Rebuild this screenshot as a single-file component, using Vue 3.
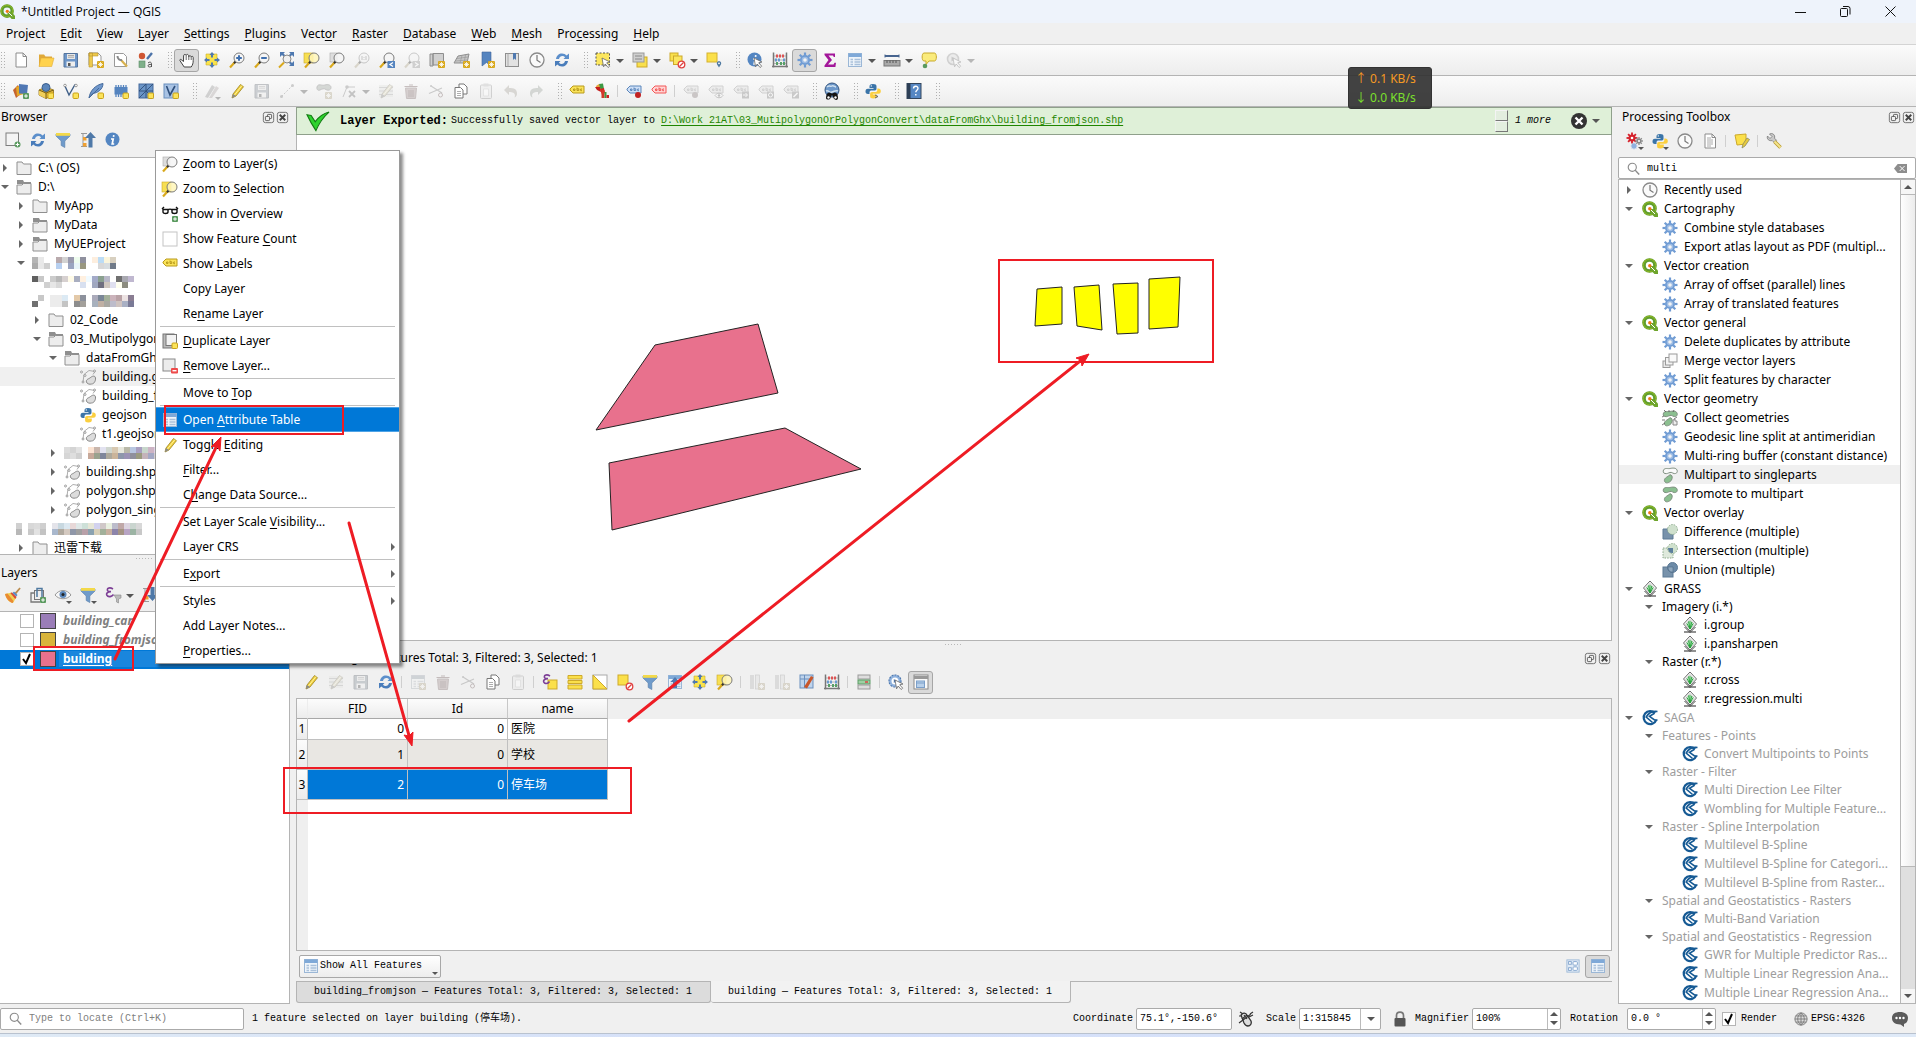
<script setup>
import { h } from 'vue'

/* ---------- icon fragments ---------- */
const badge = '<rect x="9" y="9" width="7" height="7" rx="1" fill="#d9a91d"/><path d="M12.500 10v5M10 12.500h5M10.800 10.800l3.400 3.400M14.200 10.800l-3.400 3.400" stroke="#fff" stroke-width=".8"/>'
const box = '<rect x="10" y="10" width="5.500" height="5.500" rx="1" fill="#fbe35a" stroke="#c9a21b"/>'
const plus = '<rect x="10" y="10" width="6" height="6" rx="1" fill="#5a9a5f"/><path d="M13 11.200v3.600M11.200 13h3.600" stroke="#fff"/>'
const lens = (fill = '#f4f4f4') => `<path d="M1 15.500L6 10" stroke="#d9a91d" stroke-width="2.200"/><path d="M5 11.200l1.600-1.700" stroke="#333" stroke-width="2"/><circle cx="10" cy="6" r="5" fill="${fill}" fill-opacity=".85" stroke="#7c7c7c"/>`
const tri = '<path d="M11 14h6l-3 3z" fill="#555"/>'
const cursor = '<path d="M7 6l8 4-3.300.800 3 3.400-1.600 1.300-2.900-3.500-1.600 2.800z" fill="#fff" stroke="#666" stroke-width=".8"/>'
const tag = (f, s) => `<path d="M1 6l3-3h11v7H4L1 7z" fill="${f}" stroke="${s}"/><path d="M4.500 7.500v-1.500h1.500v1.500zM8 4.500v3h1.800v-1.700H8M13 6h-1.300v1.700H13" stroke="${s}"/>`
const noEntry = '<circle cx="12.500" cy="12.500" r="3.300" fill="#fff" stroke="#e04040" stroke-width="1.300"/><path d="M10.500 14.500l4-4" stroke="#e04040" stroke-width="1.300"/>'
const teeth = (c, r1 = 4.500, r2 = 7.500, w = 2.200, cx = 8, cy = 8) =>
  Array.from({ length: 8 }, (_, i) => {
    const a = (i * Math.PI) / 4
    const p = (r) => `${(cx + Math.cos(a) * r).toFixed(1)} ${(cy + Math.sin(a) * r).toFixed(1)}`
    return `<path d="M${p(r1)}L${p(r2)}" stroke="${c}" stroke-width="${w}"/>`
  }).join('')
const grid = '<rect x="1.500" y="1.500" width="13" height="13" fill="#eef4fa" stroke="#9bb7d6"/><rect x="1.500" y="1.500" width="13" height="3.500" fill="#7fa9d8"/><path d="M3.500 7.500h2.500M7.500 7.500h6M3.500 10h2.500M7.500 10h6M3.500 12.500h2.500M7.500 12.500h6" stroke="#a9c0da" stroke-width="1.300"/>'
const floppy = '<path d="M1 1.500h13.500V15H1z" fill="#6d96c9" stroke="#55749c"/><rect x="4" y="2" width="8" height="5" fill="#e6e6e6"/><path d="M5 3.500h6M5 5.200h6" stroke="#999" stroke-width=".8"/><rect x="3.500" y="9.500" width="8.500" height="5" fill="#eee"/><rect x="5" y="11" width="2.500" height="3" fill="#555"/>'
const pencil = '<path d="M3 15l1-4 7.500-9.500 3 2.200L7 13z" fill="#f0cf3a" stroke="#9b8324" stroke-width=".8"/><path d="M3 15l1-4 3 2z" fill="#8b8b8b"/><path d="M5.500 12l7.500-9.500" stroke="#fff3a0"/>'
const funnel = '<path d="M1 2h14v2L9.800 9v6.500l-3.600-2V9L1 4z" fill="#6f9bcb" stroke="#5a81ad" stroke-width=".7"/><rect x="1" y="1" width="14" height="2.800" fill="#f3d94a"/>'
const poly = '<path d="M3 13L4 5.500 9 1.500l6 1-2 3" stroke="#999" stroke-width=".8"/><path d="M7 14c-2-3 1-4 3-5 2-2 5-3 5.500 0 .3 3-1.500 6-4 6-2 .5-3.500 0-4.500-1z" fill="#dcdcdc" stroke="#888"/><circle cx="1.500" cy="3" r="1" fill="#fff" stroke="#888" stroke-width=".8"/><circle cx="5" cy="6.500" r="1" fill="#fff" stroke="#888" stroke-width=".8"/><circle cx="3" cy="13" r="1" fill="#fff" stroke="#888" stroke-width=".8"/><circle cx="14.500" cy="2" r="1" fill="#fff" stroke="#888" stroke-width=".8"/>'
const snake = '<path d="M8 1c-3 0-3.500 1-3.500 2.500V5H8.500v.7H3C1 5.700.5 7 .5 8.500S1.200 11 3 11h1.500V9.500C4.500 8 5.500 7.500 6.500 7.500h3.300C11 7.500 11.500 6.500 11.500 5.500V3.500C11.500 1.700 10.500 1 8 1z" fill="#3a74a8"/><path d="M8.300 15.500c3 0 3.500-1 3.500-2.500v-1.500H7.800v-.7h5.500c2 0 2.500-1.300 2.500-2.800S15 5.500 13.300 5.500h-1V7c0 1.500-1 2-2 2H7c-1.200 0-1.900.8-1.900 2v2c0 1.800.8 2.500 3.200 2.500z" fill="#fbcf3f"/><circle cx="6.300" cy="2.900" r=".7" fill="#fff"/>'
const arrows4 = '<path d="M2 2h11v11H2z" fill="#f9e34c" stroke="#cfae27" stroke-width=".6"/><path d="M8 0l2.600 3H9v2.500H7V3H5.400zM8 16l2.600-3H9v-2.500H7V13H5.400zM0 8l3-2.600V7h2.500v2H3v1.600zM16 8l-3-2.600V7h-2.500v2H13v1.600z" fill="#4f79b0"/>'
const reload = '<path d="M2 7C2.500 3.500 5 1.500 8 1.500c2 0 3.500.8 4.600 2L15 1.500V7H9.500l1.600-1.700C9 3 5.500 4 5 7z" fill="#5c8fcb"/><path d="M14 9c-.5 3.500-3 5.500-6 5.500-2 0-3.500-.8-4.600-2L1 14.500V9h5.500l-1.600 1.700C7 13 10.500 12 11 9z" fill="#4a7dbb"/>'
const clock = '<circle cx="8" cy="8" r="7" fill="#fafafa" stroke="#8a8a8a" stroke-width="1.300"/><path d="M8 3v5.200l3.500 2.300" stroke="#777" stroke-width="1.200"/>'
const qmark = '<circle cx="7.500" cy="7.500" r="5.500" stroke="#5f9e2e" stroke-width="3.600"/><circle cx="7.500" cy="7.500" r="6.300" stroke="#93b823" stroke-width="1"/><path d="M8 8l3.500 0L16 12.500V16h-3.500L8 11.500z" fill="#6ea52c"/><path d="M8.500 8.500l4.500 4.500" stroke="#fff"/><circle cx="7.800" cy="7.800" r="1.700" fill="#ee7913"/>'
const sheet = '<path d="M3 1h7l3.500 3.500V15H3z" fill="#fff" stroke="#8c8c8c"/><path d="M10 1v3.500h3.500" stroke="#8c8c8c"/>'
const info = '<circle cx="7.500" cy="7.500" r="7" fill="#5486c2"/><path d="M8.800 3.200l-.3 1.600M6 7h2.200l-1 5h2" stroke="#fff" stroke-width="1.700"/>'
const abacus = '<rect x="1" y="1" width="14" height="14" fill="#f3f3f3"/><path d="M1.500.5v15M14.500.5v15M0 14.500h16" stroke="#777" stroke-width="1.500"/><path d="M2 4h12M2 8h12M2 11.500h12" stroke="#999" stroke-width=".7"/><path d="M5 2.500v3M8 2.500v3M11 2.500v3" stroke="#d55" stroke-width="2"/><path d="M4 6.500v3M7 6.500v3M12 6.500v3" stroke="#6a9bd0" stroke-width="2"/><path d="M5 10v3M9 10v3M12 10v3" stroke="#58a068" stroke-width="2"/>'
const clip = '<rect x="2.500" y="2" width="11" height="13.500" rx="1" fill="#e8e8e8" stroke="#999"/><rect x="5.500" y=".5" width="5" height="3" fill="#bbb"/><path d="M5.500 6h5v7h-5z" fill="#fff" stroke="#bbb" stroke-width=".7"/>'
const copy = '<path d="M6 1h5l3 3v7H6z" fill="#fff" stroke="#777"/><path d="M2 4.500h5.500L10 7v8H2z" fill="#fff" stroke="#777"/><path d="M4 8.500h4M4 10.500h4M4 12.500h4" stroke="#999" stroke-width=".8"/>'
const scissors = '<path d="M3 3l11 7M1 10.500L14 5" stroke="#888" stroke-width="1.300"/><circle cx="12.500" cy="12" r="2" stroke="#b55"/><circle cx="3" cy="3" r="1" fill="#888"/>'
const trash = '<path d="M2.500 5h11l-1 10.500h-9z" fill="#d88" stroke="#b66"/><path d="M1.500 3.500h13M6 2h4M6 7v7M8 7v7M10 7v7" stroke="#b55" stroke-width="1.200"/>'
const blob = (top, bottom) => `<path d="M1.500 3C3 .5 6 2 8 1.500s6-1 7 1.500-1 4-3 3.500-2-1.500-4-1-3 1.500-5 1S1 4.500 1.500 3z" fill="${top}" stroke="#7f8f80"/><path d="M3 15c-1.500-2 0-4 2-5s2.500-2.800 4-2 1.500 3 .5 5-5 4-6.500 2z" fill="${bottom}" stroke="#7f8f80"/>`
const eraseRows = '<rect x="1" y="2" width="14" height="12" fill="#dfe6d8"/><path d="M1 4.500h14M1 8h14M1 11.500h14" stroke="#aaa"/>'

const icons = {
  q: qmark,
  new: sheet,
  open: '<path d="M1 14.500V2.500h5l1.500 2H14v3" fill="#e0a93a"/><path d="M1 14.500l2-8.500h13l-2.300 8.500z" fill="#ffd24d" stroke="#e0ac38" stroke-width=".6"/>',
  save: floppy,
  layout: '<path d="M1 1h9l3 3v9H1z" fill="#fff" stroke="#999"/><path d="M1 1h3.500v14H1zM1 1h9v3H1z" fill="#edc94e" stroke="#b8942b" stroke-width=".6"/>' + badge,
  layoutmgr: '<path d="M1.500 1.500h9l3 3v10h-12z" fill="#fff" stroke="#999"/><path d="M8 8l6 6.500" stroke="#d9b24e" stroke-width="2.200"/><path d="M4.500 4c0 3 2 4.500 4.500 4" stroke="#888" stroke-width="2"/>',
  style: '<circle cx="4" cy="4" r="3.200" fill="#cf5633"/><path d="M9 7l5-6" stroke="#4c73a9" stroke-width="2.400"/><rect x="1" y="9" width="6" height="6.500" fill="#7fb08a" stroke="#5c8c66" stroke-width=".6"/><path d="M10 11c1.500-1.500 3.500-1 3.500.8V15M13.500 12.500c-2-.3-3.700.2-3.500 1.500s2.800 1.200 3.500 0" stroke="#555"/>',
  hand: '<path d="M4.500 9.500L2 7.500C.8 7 .5 8.200 1.200 9l4 6h7c1.500-2 2-4 2-6.500V5.500c0-1.500-1.800-1.500-2-.2 0-2-2.200-2.200-2.400-.5C9.700 1.800 7.300 1.800 7.200 3.500c-.4-1.600-2.600-1.300-2.600.3z" fill="#fff" stroke="#444"/><path d="M7.200 4v4M9.800 4.500V8M12.200 5.500V8" stroke="#444" stroke-width=".8"/>',
  panto: arrows4,
  zin: lens() + '<path d="M10 3.200v5.600M7.200 6h5.600" stroke="#3f6fae" stroke-width="2"/>',
  zout: lens() + '<path d="M7.200 6h5.600" stroke="#3f6fae" stroke-width="2"/>',
  zfull: '<path d="M1 0h5L4.500 1.500 6.500 3.500 5 5 3 3 1 5zM15 0v5l-2-2-2 2-1.500-1.500 2-2L10 0zM15 14h-5l1.500-1.500-2-2L11 9l2 2 2-2z" fill="#4f79b0"/><circle cx="8" cy="7" r="4" fill="#f0f0f0" stroke="#888"/><path d="M0 15.500l5-5" stroke="#d9a91d" stroke-width="2"/>',
  zsel: '<rect x="0" y="1" width="9" height="10" fill="#f7df52" stroke="#caa92a" stroke-width=".6"/>' + lens('#fff6b8'),
  zlay: '<rect x="1" y="1" width="7" height="9" fill="#ddd" stroke="#aaa" stroke-width=".6"/>' + lens(),
  zoomnat: lens(),
  znat: lens() + '<path d="M8 4v4M12 4v4M10 5v.8M10 7v.8" stroke="#777"/>',
  zlast: lens() + '<rect x="8.500" y="9" width="7.500" height="7" fill="#5584bf"/><path d="M14 10.500l-3 2 3 2" stroke="#fff" stroke-width="1.300"/>',
  znext: lens() + '<rect x="8.500" y="9" width="7.500" height="7" fill="#999"/><path d="M11 10.500l3 2-3 2" stroke="#fff" stroke-width="1.300"/>',
  newmap: '<path d="M1 2h3v12H1zM4 1.500h10.500V13H4z" fill="#d0d0d0" stroke="#8e8e8e"/>' + badge,
  new3d: '<path d="M4 4l11-2-2 9L0 11z" fill="#c7c7c7" stroke="#8e8e8e"/><path d="M3 6.500l11-1.500M8 3.500L6 11M11.500 3L10 11M1.500 9L13 8" stroke="#999" stroke-width=".7"/>' + badge,
  bookmark: '<path d="M3 0h9v14l-4.500-3.500L3 14z" fill="#5584bf" stroke="#3f669a" stroke-width=".6"/>' + badge,
  book: '<rect x="1.500" y="1.500" width="13" height="13" fill="#e2e2e2" stroke="#8e8e8e"/><path d="M4 1.500v13" stroke="#aaa"/><path d="M9 1h3v7l-1.500-1.500L9 8z" fill="#4f79b0"/>',
  clock, reload,
  select: '<rect x="1" y="1" width="13.500" height="12" fill="#fbe65e" stroke="#555" stroke-dasharray="2 1.500"/>' + cursor,
  selval: '<rect x="5" y="5" width="10" height="10" fill="#f9e04c" stroke="#cda92b"/><rect x="1" y="1" width="11" height="9" fill="#cfcfcf" stroke="#999"/><path d="M3 4h7M3 7h7" stroke="#888"/>',
  desel: '<rect x="1" y="1" width="8" height="8" fill="#f9e04c" stroke="#cda92b"/><rect x="4.500" y="4" width="8.500" height="8.500" fill="#fbe65e" stroke="#cda92b"/>' + noEntry,
  selloc: '<rect x="1" y="1" width="10" height="9" fill="#fbe04a" stroke="#d5b22e"/><path d="M13 15.500c-1-2-2.200-2.600-2.200-4.200 0-2.600 4.400-2.600 4.400 0 0 1.600-1.200 2.200-2.200 4.200z" fill="#4f79a0"/><circle cx="13" cy="11.300" r=".9" fill="#fff"/>',
  identify: info + cursor,
  abacus,
  gear: teeth('#6f9bd3') + '<circle cx="8" cy="8" r="5" fill="#6f9bd3"/><circle cx="8" cy="8" r="3.300" fill="#9dbce4"/><circle cx="8" cy="8" r="1.800" fill="#f4f4f4"/>',
  sigma: '<path d="M2.500 1.500H13V5h-1.200L11 3.500H6.500L10 8l-4 4.500h5.500l1-1.800H14l-.6 4.300H2.500v-1.500L6.500 8 2.500 3z" fill="#a3179a"/>',
  table: grid,
  measure: '<path d="M1 4h14" stroke="#47648f" stroke-width="2"/><path d="M1 2.500v3M15 2.500v3" stroke="#47648f"/><rect x="0" y="8.500" width="16" height="5.500" fill="#aaa" stroke="#777"/><path d="M3 8.500v2.500M6 8.500v2.500M9 8.500v2.500M12 8.500v2.500" stroke="#555"/>',
  tip: '<path d="M3 1h10.500C16 1 16 9 13.500 9H8l-3 3.500V9H3C.5 9 .5 1 3 1z" fill="#faeb7c" stroke="#c8aa2c"/><circle cx="4" cy="14" r="2.300" fill="#5a9a5f"/>',
  action: '<circle cx="7" cy="7" r="5.500" fill="#ddd" stroke="#999" stroke-width="1.600"/><path d="M5.500 4.500l4 2.500-4 2.500z" fill="#888"/>' + cursor,
  dsm: '<path d="M0 7l5-5 4 8-6 5z" fill="#c5642f"/><path d="M3 4l7-2 1 9-7 2z" fill="#e3a727"/><path d="M6 1l9 1-1 9-8-.5z" fill="#5078b4"/>' + plus,
  gpkg: '<path d="M1 7l7-3 7.500 3v5L8 15.500 1 12z" fill="#e3b93d" stroke="#8a6b16" stroke-width=".8"/><circle cx="8" cy="4.500" r="4" fill="#5b86bb" stroke="#3b5f8d"/><path d="M1 7l7 3v5.500L1 12z" fill="#f0cf5a"/><path d="M1 7l7 3 7.500-3M8 10v5.500" stroke="#6b5210" stroke-width=".9"/>' + box,
  shp: '<path d="M1.500 2L6 12l6-10.500" stroke="#3f5f88" stroke-width="1.400"/><circle cx="2" cy="2.500" r="1.300" fill="#fff" stroke="#777" stroke-width=".7"/><circle cx="13" cy="2.500" r="1.300" fill="#fff" stroke="#777" stroke-width=".7"/>' + box,
  spatialite: '<path d="M1 15C2 8 7 2 15 .5 15 6 10 10 4.500 10.500z" fill="#6f97cb" stroke="#44699b"/><path d="M1 15L11 5" stroke="#44699b"/>' + box,
  scratch: '<rect x="1.500" y="4" width="13" height="7.500" fill="#5584bf"/><path d="M3 2v12M5.500 2v12M8 2v12M10.500 2v12M13 2v12" stroke="#5584bf" stroke-width="1.300"/>' + box,
  mesh: '<rect x="1" y="1" width="14" height="14" fill="#6a94c6" stroke="#44699b"/><path d="M1 8h14M8 1v14M1 8l7-7M1 15L15 1M8 8l7 7" stroke="#2f4f7b" stroke-width=".9"/>' + box,
  virtual: '<rect x="1" y="1" width="14" height="14" fill="#a9c3e4" stroke="#6a8fbd"/><path d="M3.500 3L7 12l5-9" stroke="#2f4f7b" stroke-width="1.600"/>' + box,
  edits: '<path d="M1 14L8 2l3 2-7 11z" fill="#999"/><path d="M5 15l7-12 3 2-7 10z" fill="#c4a4a4"/>' + tri,
  pencil, floppy,
  line: '<path d="M2.500 13.500L13 3" stroke="#888" stroke-dasharray="2 1.500"/><circle cx="2.500" cy="13.500" r="1.500" fill="#888"/><circle cx="13.500" cy="2.500" r="1.500" fill="#888"/>',
  addpoly: '<path d="M1 4c1-4 5-1 8-2s6 0 6 2.500S12 8 10 6.500 6 6 4 7 .5 6.500 1 4z" fill="#8bb08f" stroke="#777"/>' + badge,
  vertex: '<path d="M2 14L6 4h8" stroke="#888"/><circle cx="6" cy="4" r="1.800" fill="#888"/><path d="M8 8l6 6M14 8l-6 6" stroke="#777" stroke-width="1.800"/>',
  multiedit: eraseRows + pencil,
  trash, scissors, copy, clip,
  undo: '<path d="M1 7l5-5v3c5 0 8 1 8 5.500 0 2-1 3.500-2.500 4 1.500-4-1-5.500-5.500-5.500v3z" fill="#b9a77c"/>',
  redo: '<path d="M15 7l-5-5v3C5 5 2 6 2 10.500c0 2 1 3.500 2.500 4C3 10.500 5.500 9 10 9v3z" fill="#8fae8f"/>',
  label: tag('#fbe45a', '#b99a1c'),
  diagram: '<path d="M2 3l3-2 3 2-2 4-3-1z" fill="#e8a33a"/><path d="M5 1l4-.5 1 5.500-3 2z" fill="#3d9a45"/><path d="M1 4l5 0 1 5-4-2z" fill="#c41e1e"/><path d="M6 6l4-1 1 5-3 2z" fill="#d22"/><path d="M7.500 7h3v8h-3z" fill="#d23a2a"/><path d="M10.500 9h2v6h-2z" fill="#3d9a45"/><path d="M12.500 12H15v3h-2.500z" fill="#c22"/>',
  pinlabel: tag('#cfe0f7', '#5b86bb') + '<circle cx="12" cy="12" r="3" fill="#c32222"/>',
  badlabel: tag('#ffd6d6', '#f25757'),
  l1: tag('#ddd', '#999') + '<circle cx="12" cy="12" r="3" fill="#a77"/>',
  l2: tag('#ddd', '#999') + '<path d="M7 12.500c2-3 6-3 8 0-2 3-6 3-8 0z" fill="#fff" stroke="#777"/><circle cx="11" cy="12.500" r="1.300" fill="#777"/>',
  l3: tag('#ddd', '#999') + '<rect x="9" y="8.500" width="7" height="7" fill="#888"/><path d="M10 12h4M12.500 10l2 2-2 2" stroke="#fff"/>',
  l4: tag('#ddd', '#999') + '<rect x="9" y="8.500" width="7" height="7" fill="#888"/><circle cx="12.500" cy="12" r="2" stroke="#fff"/>',
  l5: tag('#ddd', '#999') + '<rect x="9" y="8.500" width="7" height="7" fill="#888"/><path d="M10.500 14l4-4" stroke="#fff" stroke-width="1.500"/>',
  globesearch: '<circle cx="8" cy="7" r="7" fill="#6d98ca" stroke="#34557f"/><path d="M3 4c2-2 4 0 5-1s3 1 4 1M2 8c3-1 3 2 6 1s4-2 6-1" stroke="#cfe0ef" stroke-width="1.500"/><path d="M2 15c0-3 1-5.500 3-5.500s1.500 1 3 1 1-1 3-1 3 2.500 3 5.500-4 2-4.500 0L8.500 12.500h-1L6.500 15C6 17 2 17 2 15z" fill="#151515"/><circle cx="4.500" cy="14.500" r="1.200" fill="#fff"/><circle cx="11.500" cy="14.500" r="1.200" fill="#fff"/>',
  python: snake,
  pyconsole: snake + '<path d="M10 12l3 1.500-3 1.500" stroke="#666"/>',
  help: '<rect x="1" y="0.500" width="14" height="15" fill="#5687c3" stroke="#34465c"/><rect x="1" y="0.500" width="3.500" height="15" fill="#2c3e55"/><path d="M7.500 5.500c0-3 4.500-3 4.500-.3 0 2-2.200 2-2.200 4M9.800 11v1.500" stroke="#fff" stroke-width="1.400"/>',
  addlayer: '<rect x="1" y="1" width="12.500" height="12.500" fill="#f4f4f4" stroke="#7d7d7d"/><circle cx="12.500" cy="12.500" r="3" fill="#5a9a5f"/><path d="M12.500 10.700v3.600M10.700 12.500h3.600" stroke="#fff"/>',
  funnel,
  funnelm: funnel + tri,
  collapse: '<path d="M1 1.500h6M1 14.500h6M3 2v12" stroke="#999"/><rect x="3" y="5" width="3.500" height="3.500" fill="#f0a030"/><rect x="3" y="11" width="3.500" height="3.500" fill="#f0a030"/><path d="M10.500 0L16 6h-3.500v9.500h-4V6H5z" fill="#4f79a8"/>',
  expand: '<path d="M1 1.500h6M1 14.500h6M3 2v12" stroke="#999"/><rect x="3" y="9" width="3.500" height="3.500" fill="#f0a030"/><path d="M10.500 14L16 8h-3.500V0h-4v8H5z" fill="#4f79a8"/>',
  info,
  brush: '<path d="M9 6.500l5.500-6 1.200 1L10.500 8z" fill="#b98b4e"/><path d="M0 7l7-1.500 4.500 4.500-3.500 6C5 16 1 12 0 7z" fill="#f1d152"/><path d="M0 7l2.500-.5 6 7.500-.8 2C5 15.500 1 12 0 7z" fill="#e98a33"/><path d="M7 5.500l4.500 4.500-1.200 2-5-6z" fill="#d9483b"/><path d="M9 4.500l3.500 3.500-1.200 1.500L7.500 6z" fill="#5a8ac6"/>',
  addgroup: '<path d="M4 6H1v9h9" stroke="#777" stroke-width="1.300"/><rect x="4.500" y="3.500" width="9" height="9" fill="#eee" stroke="#777"/><path d="M7 10V1.500h5V10" stroke="#4f79a0" stroke-width="1.500"/>' + plus,
  eye: '<path d="M0 8c4-6 12-6 16 0-4 5-12 5-16 0z" fill="#f6f6f6" stroke="#999"/><circle cx="8" cy="7.500" r="3.500" fill="#5a86ba"/><circle cx="8" cy="7.500" r="1.500" fill="#222"/>' + tri,
  epsf: '<path d="M8 2C4-.5 1 2 3 4c1 .8 2.500.6 3 .6C3 4.500 0 6.500 2.500 9c2 1.500 5 0 6-1.500" stroke="#7d3f96" stroke-width="1.600"/><path d="M9 8h7v3l-2.500 1v4l-2-1v-3z" fill="#bbb" stroke="#888" stroke-width=".6"/>',
  folder: '<path d="M1 2h5l1.500 2H15v10.500H1z" fill="#ededed" stroke="#8f8f8f"/>',
  folders: '<path d="M1 1h6l1 2h7v2H1z" fill="#8f8f8f"/><path d="M1 6h5l1.500-1.500H15V15H1z" fill="#ededed" stroke="#8f8f8f"/>',
  poly,
  glasses: '<path d="M0 3l2-2M16 3l-2-2M1 3.500h5v2.500c0 2-5 2-5 0zM10 3.500h5v2.500c0 2-5 2-5 0zM6 4c1-1 3-1 4 0" stroke="#111" stroke-width="1.400"/>' + plus,
  blankbox: '<rect x="1" y="1" width="14" height="14" fill="#fff" stroke="#c4c4c4"/>',
  duplicate: '<rect x="1" y="1" width="11" height="14" fill="#bbb" stroke="#777"/><rect x="4" y="1.500" width="10.500" height="11" fill="#f3f3f3" stroke="#777"/>' + box,
  remove: '<rect x="1" y="1" width="12" height="12" fill="#ececec" stroke="#888"/><rect x="9" y="10" width="7" height="5.500" rx="1" fill="#ee4b4b"/><path d="M10.500 12.700h4" stroke="#fff" stroke-width="1.400"/>',
  addfeat: grid + badge,
  selexp: '<rect x="6" y="6" width="9" height="9" fill="#fbe04a" stroke="#cda92b"/><path d="M8 2C4-.5 1 2 3 4c1 .8 2.500.6 3 .6C3 4.500 0 6.500 2.500 9c2 1 4 0 5-1.500" stroke="#7d3f96" stroke-width="1.600"/>',
  selall: '<path d="M1 1.500h14v3.500H1zM1 6.500h14v3H1zM1 11h14v4H1z" fill="#fbe04a" stroke="#cda92b"/>',
  invert: '<rect x="1" y="1" width="14" height="14" fill="#fff" stroke="#aaa"/><path d="M1 1v14h14z" fill="#fbe04a" stroke="#cda92b"/>',
  unselect: '<rect x="1" y="1" width="10" height="10" fill="#fbe04a" stroke="#cda92b"/>' + noEntry,
  totop: grid + '<path d="M8 3l4.500 5H10v6H6V8H3.500z" fill="#4f79b0"/>',
  newfield: '<rect x="1" y="1" width="4" height="14" fill="#bbb"/><rect x="6.500" y="1" width="4" height="14" fill="#ddd" stroke="#999" stroke-width=".7"/>' + badge,
  condfmt: '<rect x="1" y="1" width="13" height="13" fill="#bfd4ec" stroke="#6a8fbd"/><path d="M1 5h13M5.500 1v13" stroke="#6a8fbd"/><path d="M5 13L12 2l2.500 1.500L8 14.500z" fill="#c9572a"/>',
  dock: '<rect x="2" y="1" width="12" height="4" fill="#ddd" stroke="#999"/><rect x="2" y="6" width="12" height="4" fill="#9dd0a3" stroke="#5c9c66"/><rect x="2" y="11" width="12" height="4" fill="#ddd" stroke="#999"/><path d="M9 8h3" stroke="#d44" stroke-width="1.500"/>',
  actionon: '<circle cx="7" cy="7" r="6" fill="#8fb2de" stroke="#4f79b0" stroke-width="1.200" stroke-dasharray="2 1"/><circle cx="7" cy="7" r="3.500" fill="#fff"/><path d="M5.800 5l3 2-3 2z" fill="#4f79b0"/>' + cursor,
  dockwin: '<rect x="1" y="1" width="14" height="14" fill="#fafafa" stroke="#8a8a8a"/><path d="M1 3.500h14" stroke="#999" stroke-width="3"/><rect x="3.500" y="7" width="8" height="6.500" fill="#b8d0ea" stroke="#7b9fc9"/><path d="M3.500 9h8" stroke="#7b9fc9"/>',
  form: '<rect x="1" y="1" width="14" height="14" fill="#dfeaf6" stroke="#9bb7d6"/><rect x="3" y="3" width="3" height="3" fill="#fff" stroke="#7b9fc9"/><rect x="3" y="10" width="3" height="3" fill="#fff" stroke="#7b9fc9"/><rect x="8" y="3" width="5" height="4" rx="1" fill="#fff" stroke="#7b9fc9"/><rect x="8" y="9" width="5" height="4" rx="1" fill="#fff" stroke="#7b9fc9"/>',
  gears: teeth('#d5202a', 2, 5.500, 1.800, 5, 5) + '<circle cx="5" cy="5" r="3.500" fill="#d5202a"/><circle cx="5" cy="5" r="1.300" fill="#fff"/>' + teeth('#888', 1.500, 4, 1.300, 12, 8) + '<circle cx="12" cy="8" r="2.500" fill="#888"/><circle cx="12" cy="8" r="1" fill="#fff"/>' + teeth('#8fb0de', 1, 3.200, 1.200, 7, 13) + '<circle cx="7" cy="13" r="2.200" fill="#8fb0de"/>' + tri,
  pythonm: snake + tri,
  report: sheet + '<path d="M5 5h4M5 7h6M5 9h6M5 11h6M5 13h4" stroke="#aaa"/>',
  editinplace: '<path d="M1 2l11-1v10l-9 1z" fill="#fbe04a" stroke="#cda92b"/><path d="M8 15l1-4 4-6 2.500 1.500L11 13z" fill="#e6c93e" stroke="#8b8b60" stroke-width=".8"/>',
  wrench: '<path d="M1.500 3l2.500 2.500 2-2L3.500 1c3-1.500 6 1 5 4.200l2 2-2.300 2.300-2-2C3.500 8.500.2 6 1.500 3z" fill="#c9c9c9" stroke="#777" stroke-width=".8"/><path d="M8.500 8.500l6 6" stroke="#b8982a" stroke-width="3.500"/><path d="M8.500 8.500l6 6" stroke="#f4e48c" stroke-width="2"/>',
  merge: '<rect x="1" y="8" width="7" height="6.500" fill="#e9e9e9" stroke="#999"/><rect x="3.500" y="4.500" width="7.500" height="7.500" fill="#f3f3f3" stroke="#999"/><rect x="7" y="1" width="8" height="8" fill="#fafafa" stroke="#999"/>',
  collect: blob('#8bbf90', '#8bbf90') + '<path d="M2 0l2 2M7 0v2M12 0l-1 2M0 7l2-1M0 10h3M0 15l3-2M12 9l3-2" stroke="#555" stroke-width=".8"/><path d="M11 10l2-1v2h2v4h-4z" fill="#eee" stroke="#888"/>',
  single: blob('#fafafa', '#8bbf90'),
  multi: blob('#8bbf90', '#8bbf90'),
  diff: '<path d="M1 5h5c0 3 1 5 5 5v5H1z" fill="#7892ab" stroke="#5d7a95"/><circle cx="10.500" cy="5.500" r="5" fill="#cfe0cd" stroke="#8aa78a" stroke-width=".9" stroke-dasharray="1.500 1.200"/>',
  inter: '<path d="M1 5h10v10H1z" fill="#dfe9dc" stroke="#8aa78a" stroke-dasharray="1.500 1.200"/><circle cx="10.500" cy="5.500" r="5" fill="#cfe0cd" stroke="#8aa78a" stroke-width=".9" stroke-dasharray="1.500 1.200"/><path d="M6 5h5v5c-3 .5-5-1.500-5-5z" fill="#5d7f9c"/>',
  union: '<rect x="1" y="5" width="10" height="10" fill="#7892ab" stroke="#5d7a95"/><circle cx="10.500" cy="5.500" r="5" fill="#6d8ba8" stroke="#5d7a95"/><path d="M6 5h5v5c-3 .5-5-1.500-5-5z" fill="#8fa7bd" stroke="#4c6883" stroke-width=".6"/>',
  grass: '<path d="M2 15h12" stroke="#555" stroke-width="1.300"/><path d="M8 0l6.500 7L8 14 1.500 7z" fill="#fff" stroke="#555" stroke-width=".9"/><path d="M8 2.500l4.300 4.700L8 12 3.700 7.200z" fill="#e8f5e8" stroke="#9a9a9a" stroke-width=".6"/><path d="M8 12V4M8 12L5 6.500M8 12l3-5.500M8 12L6.500 4.500M8 12l1.800-7" stroke="#27a53c"/><path d="M2.500 10L8 15.500 13.500 10" stroke="#444"/>',
  saga: '<path d="M13 3.200A6.500 6.500 0 1 0 14.300 9.800" stroke="#165a94" stroke-width="2.200"/><path d="M15.500 1.500C10.500 1 6.500 3 4.200 7l6.300 5.500" stroke="#165a94" stroke-width="1.600"/><path d="M12.500 3.200L7.500 6.300l5 3.700H15.500" stroke="#165a94" stroke-width="1.600"/>',
  search: '<circle cx="6.500" cy="6.500" r="5" stroke="#8c8c8c" stroke-width="1.400"/><path d="M10 10l5 5.500" stroke="#8c8c8c" stroke-width="1.800"/>',
  clear: '<path d="M0 8l4.500-5.500H16v11H4.500z" fill="#8d8d8d"/><path d="M7 5l6 6M13 5l-6 6" stroke="#fff" stroke-width="1.200"/>',
  float: '<rect x=".5" y=".5" width="15" height="15" rx="3" stroke="#666" stroke-width="1.300"/><rect x="6.500" y="3.500" width="6" height="6" rx="1" stroke="#555" stroke-width="1.300"/><rect x="3.500" y="6.500" width="6" height="6" rx="1" fill="#f0f0f0" stroke="#555" stroke-width="1.300"/>',
  close: '<rect x=".5" y=".5" width="15" height="15" rx="3" stroke="#666" stroke-width="1.300"/><path d="M4 4l8 8M12 4l-8 8" stroke="#444" stroke-width="2.800"/>',
  check: '<path d="M0 3.500l3 .5 3 4.500C9 4.500 12 2.500 16 1.500 12 5 9 9 6.500 15 4.500 12 2 8 0 3.500z" fill="#2ed32e" stroke="#127a12" stroke-width=".8"/>',
  closemsg: '<circle cx="8" cy="8" r="8" fill="#333"/><path d="M4.500 4.500l7 7M11.500 4.500l-7 7" stroke="#fff" stroke-width="2.400"/>',
  lock: '<path d="M4.500 7V4.500c0-4.500 7-4.500 7 0V7" stroke="#777" stroke-width="1.700"/><rect x="2.500" y="7" width="11" height="8.500" rx="1" fill="#555"/>',
  globe: '<circle cx="8" cy="8" r="7" fill="#ddd" stroke="#777"/><path d="M1 8h14M2 4.500h12M2 11.500h12M8 1v14M8 1C3 4 3 12 8 15M8 1c5 3 5 11 0 14" stroke="#777"/>',
  bubble: '<path d="M8 1c5 0 8 2.500 8 6s-2 5.500-4 6v3l-3.500-2.600C3 13.500 0 11 0 7s3-6 8-6z" fill="#5c5c5c"/><circle cx="4.500" cy="7" r="1.200" fill="#fff"/><circle cx="8" cy="7" r="1.200" fill="#fff"/><circle cx="11.500" cy="7" r="1.200" fill="#fff"/>',
  mouse: '<path d="M3 4c2-3 5-2 6 0l4 6c1 3-1 5-3 5s-3-1-4-3z" fill="#ddd" stroke="#333" stroke-width="1.300"/><path d="M4 8l5-4M6 4l3 4M2 1l3 2M1 5l3 0M12 3l3-2M11 6l4-2M1 12l12-9" stroke="#333" stroke-width="1.200"/>'
}

const Icon = ({ name, size = 16 }) =>
  h('svg', { viewBox: '0 0 16 16', width: size, height: size, fill: 'none', innerHTML: icons[name], style: 'overflow:visible;flex:none', 'aria-hidden': 'true' })
Icon.props = ['name', 'size']

/* "&" marks the access key of a label */
const Mnemonic = ({ text }) => {
  const at = text.indexOf('&')
  if (at < 0) return h('span', text)
  return h('span', [text.slice(0, at), h('u', text[at + 1]), text.slice(at + 2)])
}
Mnemonic.props = ['text']

/* "!" disabled, "*" pressed, trailing ">" drop-down, "|" handle, "/" separator */
const parse = (s) =>
  s.split(' ').map((t) => {
    if (t === '|' || t === '/') return { kind: t }
    return { kind: 'b', off: t.startsWith('!'), on: t.startsWith('*'), drop: t.endsWith('>'), name: t.replace(/[!*>]/g, '') }
  })

const menus = ['Pro&ject', '&Edit', '&View', '&Layer', '&Settings', '&Plugins', 'Vect&or', '&Raster', '&Database', '&Web', '&Mesh', 'Pro&cessing', '&Help']
const mainBars = [
  parse('new open save layout layoutmgr style | *hand panto zin zout zfull zsel zlay !znat zlast !znext newmap new3d bookmark book clock reload | select> selval> desel> selloc | identify abacus *gear sigma table> measure> tip !action>'),
  parse('dsm gpkg shp spatialite scratch mesh virtual | !edits pencil !floppy !line> !addpoly !vertex> !multiedit !trash !scissors copy !clip !undo !redo | label diagram / pinlabel badlabel / !l1 !l2 !l3 !l4 !l5 | globesearch | pyconsole | help |')
]
const browserBar = parse('addlayer reload funnel collapse info')
const layersBar = parse('brush addgroup eye funnelm epsf> expand')
const attrBar = parse('pencil !multiedit !floppy reload / !addfeat !trash !scissors copy !clip / selexp selall invert unselect funnel totop panto zsel / !newfield !newfield condfmt abacus / dock / actionon *dockwin')
const toolboxBar = parse('gears pythonm clock report / editinplace / wrench')

const X = null
const browserRows = [
  { d: 0, a: 'r', i: 'folder', t: 'C:\\ (OS)' },
  { d: 0, a: 'd', i: 'folders', t: 'D:\\' },
  { d: 1, a: 'r', i: 'folder', t: 'MyApp' },
  { d: 1, a: 'r', i: 'folders', t: 'MyData' },
  { d: 1, a: 'r', i: 'folders', t: 'MyUEProject' },
  { d: 1, a: 'd', m: [['#b5b5b5', '#e9e9e9', X, X, '#b9aaad', '#d2d2d2', '#9a9aae', '#eefcee', '#8f909e', X, '#fdeede', '#bcdcf5', '#fbf5dc', '#d8d0c0'], ['#ababab', '#e8e8e8', '#d0d0d0', X, '#b8d0f0', X, '#9aa4c0', '#e8f4f8', '#999780', X, X, '#d8d8d8', '#d8dde0', '#707a88']] },
  { d: 1, m: [['#606060', '#c8c8c8', X, '#cccccc', '#b8b8b8', '#d6d0d0', '#fffbe8', '#a9aec0', '#fff0e0', '#f0faff', '#a3aac8', '#8aa08f', '#b8b8c8', X, '#707070', '#a8a8b0', '#c0b8d0'], [X, X, '#d0d0d0', '#e6e6e6', '#d8d8d8', X, X, X, '#d8e0f0', X, '#a0a8c0', '#707080', '#d0c8c0', '#e0e0f0', '#fffff0', '#8c8c80']] },
  { d: 1, m: [[X, '#c8c8c8', X, '#ececec', '#ececec', '#dceaf4', X, '#e3c9a8', '#8c919c', X, '#ababbb', '#7b8797', '#a4b09a', '#cbb3bb', '#b9a2a6', '#ece2e2', '#8a7d92'], ['#707070', X, X, '#ececec', '#ececec', '#c4c4c4', X, '#8d8d8d', '#a3a09b', X, '#a8b1bd', '#c0b0a4', '#a9a8a2', '#bdbccb', '#cfc3c0', '#a9b0c4', '#7a7a96']] },
  { d: 2, a: 'r', i: 'folder', t: '02_Code' },
  { d: 2, a: 'd', i: 'folders', t: '03_MutipolygonOrPolygonConvert' },
  { d: 3, a: 'd', i: 'folders', t: 'dataFromGhx' },
  { d: 4, i: 'poly', t: 'building.geojson', hot: true },
  { d: 4, i: 'poly', t: 'building_fromjson.geojson' },
  { d: 4, i: 'python', t: 'geojson' },
  { d: 4, i: 'poly', t: 't1.geojson' },
  { d: 3, a: 'r', m: [['#dcdcdc', '#d4d4d4', '#e2e2e2', X, '#fbe3d2', '#c9b6ac', '#e2e2f0', '#d0d6cf', '#d8c8b0', '#e7e7dd', '#b9b9a9', '#b8c6e0', '#a99fc0', '#c7d6cb', '#cdb4c4', '#e0d2e8'], ['#d6d6d6', '#dedede', '#d0d0d0', X, '#c7a99a', '#9aa28e', '#7f869b', '#aea99c', '#cab49a', '#8e97ab', '#9b93b5', '#8f8f9c', '#9a9a7f', '#c4b3ba', '#a3a8c4', '#d6cfd0']] },
  { d: 3, a: 'r', i: 'poly', t: 'building.shp' },
  { d: 3, a: 'r', i: 'poly', t: 'polygon.shp' },
  { d: 3, a: 'r', i: 'poly', t: 'polygon_singleparts.shp' },
  { d: 0, m: [['#d0d0d0', X, '#d8d8d8', '#dcdcdc', '#cfcfcf', X, '#e4e4ea', '#c8d8e0', '#dce8f0', '#e8d8d8', '#dfe8e8', '#cde0d8', '#e6e6d6', '#d2d2ee', '#d0c8c8', '#e9f0e0', '#bcbccb', '#c0a8a8', '#dcd4e0', '#cad5cf', '#d8d8d8'], ['#b8b8b8', X, '#c9c9c9', '#e2e2e2', '#c3c3c3', X, '#a9b8cd', '#b0a99f', '#d4c9c0', '#8f97a8', '#9f9f9f', '#b8a0a8', '#8ba2b0', '#d8d0b8', '#a2b09a', '#c8b0a0', '#8c84aa', '#a49484', '#b8a4c4', '#9cb4a4', '#c8c8c8']] },
  { d: 1, a: 'r', i: 'folder', t: '迅雷下载' }
]

const layers = [
  { t: 'building_car', c: '#9a7db8', on: false },
  { t: 'building_fromjson', c: '#d8b43c', on: false },
  { t: 'building', c: '#e8718d', on: true }
]

const contextMenu = [
  { t: '&Zoom to Layer(s)', i: 'zlay' }, { t: 'Zoom to &Selection', i: 'zsel' }, { t: 'Show in &Overview', i: 'glasses' },
  { t: 'Show Feature &Count', i: 'blankbox' }, { t: 'Show &Labels', i: 'label' }, { t: 'Copy Layer' }, { t: 'Re&name Layer' }, '-',
  { t: '&Duplicate Layer', i: 'duplicate' }, { t: '&Remove Layer...', i: 'remove' }, '-', { t: 'Move to &Top' }, '-',
  { t: 'Open &Attribute Table', i: 'table', hot: true }, { t: 'Toggle &Editing', i: 'pencil' }, { t: '&Filter...' }, { t: 'C&hange Data Source...' }, '-',
  { t: 'Set Layer Scale &Visibility...' }, { t: 'Layer CRS', sub: true }, '-', { t: 'E&xport', sub: true }, '-',
  { t: 'Styles', sub: true }, { t: 'Add Layer Notes...' }, { t: '&Properties...' }
]

const g = (t, i, d = 0) => ({ t, i, d, a: true })
const l = (t, i = 'gear', d = 1) => ({ t, i, d })
const algs = [
  { t: 'Recently used', i: 'clock', d: 0, a: true, closed: true },
  g('Cartography', 'q'), l('Combine style databases'), l('Export atlas layout as PDF (multipl...'),
  g('Vector creation', 'q'), l('Array of offset (parallel) lines'), l('Array of translated features'),
  g('Vector general', 'q'), l('Delete duplicates by attribute'), l('Merge vector layers', 'merge'), l('Split features by character'),
  g('Vector geometry', 'q'), l('Collect geometries', 'collect'), l('Geodesic line split at antimeridian'), l('Multi-ring buffer (constant distance)'),
  { ...l('Multipart to singleparts', 'single'), hot: true }, l('Promote to multipart', 'multi'),
  g('Vector overlay', 'q'), l('Difference (multiple)', 'diff'), l('Intersection (multiple)', 'inter'), l('Union (multiple)', 'union'),
  g('GRASS', 'grass'), g('Imagery (i.*)', null, 1), l('i.group', 'grass', 2), l('i.pansharpen', 'grass', 2),
  g('Raster (r.*)', null, 1), l('r.cross', 'grass', 2), l('r.regression.multi', 'grass', 2),
  ...[
    g('SAGA', 'saga'), g('Features - Points', null, 1), l('Convert Multipoints to Points', 'saga', 2),
    g('Raster - Filter', null, 1), l('Multi Direction Lee Filter', 'saga', 2), l('Wombling for Multiple Feature...', 'saga', 2),
    g('Raster - Spline Interpolation', null, 1), l('Multilevel B-Spline', 'saga', 2), l('Multilevel B-Spline for Categori...', 'saga', 2), l('Multilevel B-Spline from Raster...', 'saga', 2),
    g('Spatial and Geostatistics - Rasters', null, 1), l('Multi-Band Variation', 'saga', 2),
    g('Spatial and Geostatistics - Regression', null, 1), l('GWR for Multiple Predictor Ras...', 'saga', 2), l('Multiple Linear Regression Ana...', 'saga', 2), l('Multiple Linear Regression Ana...', 'saga', 2)
  ].map((r) => ({ ...r, dim: true }))
]

const records = [[0, 0, '医院'], [1, 0, '学校'], [2, 0, '停车场']]

/* map features, in window coordinates */
const pinks = ['655,345 758,324 778,393 596,430', '609,463 785,428 861,469 612,530']
const yellows = ['1037,289 1062,287 1062,324 1035,326', '1074,287 1099,285 1102,330 1077,326', '1113,284 1138,283 1138,333 1117,334', '1149,279 1180,277 1178,327 1149,329']

/* annotation arrows: tail and tip */
const arrows = [[115, 659, 221, 437], [349, 523, 412, 746], [629, 721, 1089, 354]].map(([x1, y1, x2, y2]) => {
  const n = Math.hypot(x2 - x1, y2 - y1)
  const ux = (x2 - x1) / n
  const uy = (y2 - y1) / n
  const p = (b, s) => `${Math.round(x2 - ux * b - uy * s)},${Math.round(y2 - uy * b + ux * s)}`
  return { x1, y1, x2: x2 - ux * 9, y2: y2 - uy * 9, head: `${x2},${y2} ${p(13, 5)} ${p(10, 0)} ${p(13, -5)}` }
})
</script>

<template>
  <div class="window">
    <header class="titlebar">
      <Icon name="q" :size="15" />
      <span>*Untitled Project — QGIS</span>
      <div class="winctl">
        <button aria-label="Minimize"><svg width="11" height="11"><path d="M0 6.500h11" stroke="#111" /></svg></button>
        <button aria-label="Restore"><svg width="11" height="11" fill="none" stroke="#111"><rect x=".5" y="2.500" width="7" height="8" rx="1" /><path d="M3 .5h5a2 2 0 0 1 2 2v6" /></svg></button>
        <button aria-label="Close window"><svg width="11" height="11"><path d="M.5.5l10 10M10.500.5l-10 10" stroke="#111" /></svg></button>
      </div>
    </header>

    <nav class="menubar"><button v-for="m in menus" :key="m"><Mnemonic :text="m" /></button></nav>

    <div v-for="(bar, n) in mainBars" :key="n" class="toolbar main">
      <i class="handle first"></i>
      <template v-for="(b, k) in bar" :key="k">
        <i v-if="b.kind === '|'" class="handle"></i>
        <i v-else-if="b.kind === '/'" class="sep"></i>
        <button v-else class="tool" :class="{ off: b.off, on: b.on, drop: b.drop }" :aria-label="b.name"><Icon :name="b.name" /><i v-if="b.drop" class="caret"></i></button>
      </template>
    </div>

    <main class="work">
      <aside class="left">
        <section class="dock browser">
          <div class="dockhead"><span>Browser</span><button aria-label="Float"><Icon name="float" :size="11" /></button><button aria-label="Close"><Icon name="close" :size="11" /></button></div>
          <div class="toolbar">
            <button v-for="b in browserBar" :key="b.name" class="tool" :aria-label="b.name"><Icon :name="b.name" /></button>
          </div>
          <div class="tree files">
            <div v-for="(r, k) in browserRows" :key="k" class="row" :class="['d' + r.d, { hot: r.hot }]">
              <i class="arrow" :class="r.a"></i>
              <svg v-if="r.m" width="126" height="14">
                <template v-for="(line, y) in r.m" :key="y"><rect v-for="(c, x) in line" :key="x" :x="x * 6" :y="1 + y * 6" width="6" height="6" :fill="c || 'none'" /></template>
              </svg>
              <template v-else><Icon :name="r.i" /><span>{{ r.t }}</span></template>
            </div>
          </div>
        </section>
        <i class="grip"></i>
        <section class="dock layerdock">
          <div class="dockhead"><span>Layers</span><button aria-label="Float"><Icon name="float" :size="11" /></button><button aria-label="Close"><Icon name="close" :size="11" /></button></div>
          <div class="toolbar">
            <button v-for="b in layersBar" :key="b.name" class="tool" :class="{ drop: b.drop }" :aria-label="b.name"><Icon :name="b.name" /><i v-if="b.drop" class="caret"></i></button>
          </div>
          <div class="tree layers">
            <label v-for="y in layers" :key="y.t" class="layer" :class="{ sel: y.on }">
              <input type="checkbox" :checked="y.on" />
              <i class="swatch" :style="{ background: y.c }"></i>
              <span>{{ y.t }}</span>
            </label>
          </div>
        </section>
      </aside>

      <section class="center">
        <div class="message">
          <Icon name="check" :size="22" />
          <b>Layer Exported:</b>
          <span>Successfully saved vector layer to <a href="#">D:\Work 21AT\03_MutipolygonOrPolygonConvert\dataFromGhx\building_fromjson.shp</a></span>
          <div class="more">
            <div class="steps"><button aria-label="Previous message"></button><button aria-label="Next message"></button></div>
            <em>1 more</em>
            <button class="dismiss" aria-label="Close message"><Icon name="closemsg" /></button>
            <i class="caret"></i>
          </div>
        </div>
        <div class="canvas">
          <svg width="100%" height="100%">
            <g transform="translate(-297 -135)" stroke="#232323">
              <polygon v-for="p in pinks" :key="p" :points="p" fill="#e8718d" />
              <polygon v-for="p in yellows" :key="p" :points="p" fill="#ffff00" />
            </g>
          </svg>
        </div>
        <section class="attr">
          <i class="grip"></i>
          <div class="dockhead"><span>building — Features Total: 3, Filtered: 3, Selected: 1</span><button aria-label="Float"><Icon name="float" :size="11" /></button><button aria-label="Close"><Icon name="close" :size="11" /></button></div>
          <div class="toolbar">
            <template v-for="(b, k) in attrBar" :key="k">
              <i v-if="b.kind === '/'" class="sep"></i>
              <button v-else class="tool" :class="{ off: b.off, on: b.on }" :aria-label="b.name"><Icon :name="b.name" /></button>
            </template>
          </div>
          <div class="grid">
            <table>
              <thead><tr><th></th><th>FID</th><th>Id</th><th>name</th></tr></thead>
              <tbody>
                <tr v-for="(r, k) in records" :key="k" :class="{ alt: k === 1, sel: k === 2 }">
                  <th>{{ k + 1 }}</th><td class="num">{{ r[0] }}</td><td class="num">{{ r[1] }}</td><td>{{ r[2] }}</td>
                </tr>
              </tbody>
            </table>
          </div>
          <div class="gridfoot">
            <button class="showall"><Icon name="table" /><span>Show All Features</span><i class="caret"></i></button>
            <button class="tool" aria-label="Form view"><Icon name="form" :size="14" /></button>
            <button class="tool on" aria-label="Table view"><Icon name="table" /></button>
          </div>
          <div class="tabs">
            <button>building_fromjson — Features Total: 3, Filtered: 3, Selected: 1</button>
            <button class="cur">building — Features Total: 3, Filtered: 3, Selected: 1</button>
          </div>
        </section>
      </section>

      <aside class="right dock">
        <div class="dockhead"><span>Processing Toolbox</span><button aria-label="Float"><Icon name="float" :size="11" /></button><button aria-label="Close"><Icon name="close" :size="11" /></button></div>
        <div class="toolbar">
          <template v-for="(b, k) in toolboxBar" :key="k">
            <i v-if="b.kind === '/'" class="sep"></i>
            <button v-else class="tool" :aria-label="b.name"><Icon :name="b.name" /></button>
          </template>
        </div>
        <div class="field search"><Icon name="search" :size="13" /><input type="text" value="multi" aria-label="Search algorithms" /><button aria-label="Clear"><Icon name="clear" :size="13" /></button></div>
        <div class="algbox">
          <div class="tree algs">
            <div v-for="(r, k) in algs" :key="k" class="row" :class="['d' + r.d, { plain: !r.i, hot: r.hot, dim: r.dim }]">
              <i class="arrow" :class="r.a ? (r.closed ? 'r' : 'd') : ''"></i>
              <Icon v-if="r.i" :name="r.i" />
              <span>{{ r.t }}</span>
            </div>
          </div>
          <div class="scroll"><button aria-label="Scroll up"><i class="up"></i></button><div class="thumb"></div><div class="trough"></div><button aria-label="Scroll down"><i class="down"></i></button></div>
        </div>
      </aside>
    </main>

    <footer class="status">
      <div class="field locate"><Icon name="search" :size="13" /><input type="text" placeholder="Type to locate (Ctrl+K)" aria-label="Locate" /></div>
      <span class="note">1 feature selected on layer building (停车场).</span>
      <label for="coord">Coordinate</label>
      <div class="field coord"><input id="coord" type="text" value="75.1°,-150.6°" /></div>
      <button class="flat mouse" aria-label="Toggle extents"><Icon name="mouse" /></button>
      <label for="scale">Scale</label>
      <div class="field scale"><select id="scale"><option>1:315845</option></select><i class="caret"></i></div>
      <button class="flat lock" aria-label="Lock scale"><Icon name="lock" /></button>
      <label for="mag">Magnifier</label>
      <div class="field spin"><input id="mag" type="text" value="100%" /><div class="ud"><i class="up"></i><i class="down"></i></div></div>
      <label for="rot" class="rotl">Rotation</label>
      <div class="field spin"><input id="rot" type="text" value="0.0 °" /><div class="ud"><i class="up"></i><i class="down"></i></div></div>
      <label class="render"><input type="checkbox" checked />Render</label>
      <button class="flat epsg"><Icon name="globe" :size="14" />EPSG:4326</button>
      <button class="flat" aria-label="Messages"><Icon name="bubble" /></button>
    </footer>
    <div class="desk"></div>

    <div class="popup" role="menu">
      <template v-for="(m, k) in contextMenu" :key="k">
        <hr v-if="m === '-'" />
        <button v-else role="menuitem" :class="{ hot: m.hot }"><i class="slot"><Icon v-if="m.i" :name="m.i" /></i><Mnemonic :text="m.t" /><i v-if="m.sub" class="arrow r"></i></button>
      </template>
    </div>

    <div class="netspeed"><span>↑ 0.1 KB/s</span><span>↓ 0.0 KB/s</span></div>

    <svg class="marks" width="100%" height="100%" aria-hidden="true">
      <g fill="none" stroke="#ee1c24" stroke-width="2">
        <rect x="165" y="406" width="178" height="28" />
        <rect x="34" y="647" width="99" height="23" />
        <rect x="284" y="768" width="347" height="45" />
        <rect x="999" y="260" width="214" height="102" />
      </g>
      <g v-for="(a, k) in arrows" :key="k" stroke="#ee1c24" fill="#ee1c24">
        <line :x1="a.x1" :y1="a.y1" :x2="a.x2" :y2="a.y2" stroke-width="3" stroke-linecap="round" />
        <polygon :points="a.head" />
      </g>
    </svg>
  </div>
</template>

<style>
body { margin: 0; background: #f0f0f0; }
</style>

<style scoped>
.window { position: relative; display: flex; flex-direction: column; height: 100vh; overflow: hidden; background: #f0f0f0; color: #000; font: 12px/16px "Noto Sans", "Noto Sans CJK SC", sans-serif; }
.window * { box-sizing: border-box; }
button { display: flex; align-items: center; margin: 0; padding: 0; border: 0; background: none; color: inherit; font: inherit; white-space: nowrap; }
input, select { margin: 0; border: 0; background: none; color: inherit; font: inherit; outline: 0; }
svg { display: block; }
:deep(u) { text-underline-offset: 2px; }

.titlebar { display: flex; align-items: center; flex: none; height: 23px; gap: 6px; background: #eef3fb; font-family: "Open Sans", sans-serif; }
.winctl { display: flex; margin-left: auto; padding-right: 3px; }
.winctl button { width: 45px; height: 20px; justify-content: center; }
.menubar { display: flex; flex: none; height: 22px; border-bottom: 1px solid #d4d4d4; }
.menubar button { padding: 0 9px 0 6px; }

.toolbar { display: flex; align-items: center; flex: none; height: 25px; }
.toolbar.main { height: 31px; background: linear-gradient(#fbfbfb, #ededed); border-bottom: 1px solid #b4b4b4; }
.tool { position: relative; flex: none; width: 25px; height: 23px; justify-content: center; }
.tool.drop { width: 37px; padding-right: 12px; }
.tool.drop .caret { position: absolute; right: 3px; top: 10px; }
.tool.on { border: 1px solid #a6a6a6; border-radius: 3px; background: #dadada; }
.tool.off { opacity: .38; filter: grayscale(.8); }
.handle { flex: none; width: 16px; height: 18px; background: radial-gradient(#b0b0b0 1px, transparent 1px) 0 0 / 3px 3px; background-clip: content-box; padding: 0 2px 0 8px; }
.handle.first { width: 8px; padding: 0 3px 0 0; }
.sep { flex: none; width: 7px; height: 12px; background: linear-gradient(#cfcfcf, #cfcfcf) 3px 0 / 1px 100% no-repeat; }
.caret, .down { width: 0; height: 0; border: 4px solid transparent; border-top-color: #555; border-bottom: 0; }
.up { width: 0; height: 0; border: 4px solid transparent; border-bottom-color: #555; border-top: 0; }

.work { display: flex; flex: 1; min-height: 0; }
.left { display: flex; flex-direction: column; flex: none; width: 290px; }
.left .dock { min-height: 0; }
.left .browser { flex: 448 1 0; }
.left .layerdock { flex: 442 1 0; }
.dock { display: flex; flex-direction: column; }
.dockhead { display: flex; align-items: center; flex: none; height: 20px; gap: 3px; padding-right: 2px; }
.dockhead span { flex: 1; white-space: nowrap; }
.left .dockhead { padding-left: 1px; }
.left .tree { border: 1px solid #b4b4b4; border-left: 0; }
.left .toolbar { margin-bottom: 5px; }
.left .layerdock .toolbar { margin-bottom: 3px; }
.grip { flex: none; height: 8px; background: repeating-linear-gradient(90deg, #b8b8b8 0 1px, transparent 1px 3px) 50% 3px / 18px 1px no-repeat; }
.tree { flex: 1; min-width: 0; min-height: 0; overflow: hidden; background: #fff; }
.row { display: flex; align-items: center; height: 19px; gap: 6px; white-space: nowrap; }
.row.hot { background: #f0f0f0; }
.row.plain { height: 17px; }
.row.dim { color: #9d9d9d; }
.arrow { flex: none; width: 12px; height: 8px; }
.arrow.r::before { content: ""; display: block; width: 0; margin-left: 3px; border: 4px solid transparent; border-left-color: #666; border-right: 0; }
.arrow.d::before { content: ""; display: block; width: 0; margin: 2px 0 0 1px; border: 4px solid transparent; border-top-color: #666; border-bottom: 0; }
.files .arrow { width: 10px; }
.files .d1 { padding-left: 16px; }
.files .d2 { padding-left: 32px; }
.files .d3 { padding-left: 48px; }
.files .d4 { padding-left: 64px; }
.layer { display: flex; align-items: center; height: 19px; padding-left: 20px; color: #808080; font-weight: bold; font-style: italic; }
.layer input, .render input { appearance: none; flex: none; width: 14px; height: 14px; border: 1px solid #b4b4b4; background: #fff; }
.layer input:checked, .render input:checked { background: #fff url("data:image/svg+xml,%3Csvg xmlns='http://www.w3.org/2000/svg' viewBox='0 0 12 12'%3E%3Cpath d='M2 6l3 4 4-9' fill='none' stroke='%23000' stroke-width='2'/%3E%3C/svg%3E"); }
.swatch { width: 16px; height: 16px; margin: 0 3px 0 6px; border: 1px solid #444; }
.layer span { flex: 1; padding-left: 4px; white-space: nowrap; }
.layer.sel { background: #0078d7; color: #fff; font-style: normal; text-decoration: underline; text-underline-offset: 2px; }
.layer.sel span { background: #1a86dd; text-decoration: underline; text-underline-offset: 2px; }

.center { display: flex; flex-direction: column; flex: 1; min-width: 0; margin: 0 6px; }
.message { display: flex; align-items: center; flex: none; height: 28px; padding: 0 11px 0 10px; border: 1px solid #8fa08b; background: #dff0d8; font: 10px/14px "Liberation Mono", "Noto Sans CJK SC", monospace; white-space: nowrap; }
.message b { margin: 0 3px 0 11px; font-size: 12px; }
.message a { color: #1f8600; text-underline-offset: 2px; }
.more { display: flex; align-items: center; margin-left: auto; }
.more em { margin: 0 20px 0 7px; }
.steps { display: flex; flex-direction: column; }
.steps button { width: 13px; height: 11px; border: 1px solid #f4f4f4; border-right-color: #777; border-bottom-color: #777; background: #e3eedf; }
.dismiss { margin-right: 5px; }
.canvas { flex: 1; min-height: 0; border: 1px solid #b4b4b4; border-top: 0; background: #fff; }
.attr { display: flex; flex-direction: column; flex: none; height: 363px; }
.attr .dockhead { padding-left: 16px; height: 18px; }
.attr .toolbar { height: 31px; padding: 0 0 1px 2px; }
.grid { flex: 1; min-height: 0; border: 1px solid #b4b4b4; background: linear-gradient(90deg, #efefef 11px, transparent 11px), linear-gradient(#efefef 20px, #fff 20px); }
table { border-collapse: separate; border-spacing: 0; table-layout: fixed; width: 311px; }
th, td { height: 30px; padding: 0 3px; border: 0 solid #c0c0c0; border-width: 0 1px 1px 0; font-weight: normal; text-align: left; }
thead th { height: 20px; border-color: #c8c8c8; border-bottom-color: #a8a8a8; background: linear-gradient(#fcfcfc, #ececec); text-align: center; }
thead th:first-child { width: 11px; border-right-color: #ededed; }
tbody th { padding: 0; background: linear-gradient(#fcfcfc, #ececec); text-align: center; }
tbody tr:first-child > * { height: 21px; }
.alt td { background: #e9e7e3; }
.num { text-align: right; }
.sel td { background: #0078d7; color: #fff; }
.gridfoot { display: flex; align-items: center; flex: none; height: 30px; padding: 0 2px 0 3px; }
.showall { position: relative; width: 142px; height: 23px; margin-right: auto; padding-left: 3px; gap: 1px; border: 1px solid #a8a8a8; border-radius: 2px; background: linear-gradient(#fff, #ededed); font: 10px/14px "Liberation Mono", monospace; }
.showall .caret { position: absolute; right: 2px; bottom: 2px; border-width: 3px; border-bottom: 0; }
.tabs { display: flex; flex: none; height: 23px; border-top: 1px solid #b4b4b4; font: 10px/14px "Liberation Mono", monospace; }
.tabs button { height: 21px; padding: 0 18px 0 17px; border: 1px solid #b4b4b4; border-top: 0; border-radius: 0 0 3px 3px; background: #dcdcdc; }
.tabs .cur { height: 22px; margin-top: -1px; border-left: 0; background: #f2f2f2; }

.right { flex: none; width: 298px; }
.right .dockhead { padding-left: 4px; }
.right .toolbar { height: 30px; padding: 0 0 2px 4px; }
.field { display: flex; align-items: center; border: 1px solid #aaa; border-radius: 2px; background: #fff; font: 10px/14px "Liberation Mono", monospace; }
.field input, .field select { flex: 1; min-width: 0; height: 100%; padding: 0; }
.search { height: 22px; padding: 0 8px; gap: 7px; }
.algbox { display: flex; flex: 1; min-height: 0; border: 1px solid #b4b4b4; }
.algs .row { padding-left: 5px; }
.algs .row.d1 { padding-left: 25px; }
.algs .row.d2 { padding-left: 45px; }
.scroll { display: flex; flex-direction: column; flex: none; width: 15px; border-left: 1px solid #b8b8b8; }
.scroll button { height: 14px; justify-content: center; background: #f6f6f6; }
.thumb { flex: 673; border: solid #b8b8b8; border-width: 1px 0; background: linear-gradient(90deg, #fefefe, #ececec); }
.trough { flex: 122; background: #dfdfdf; }

.status { display: flex; align-items: center; flex: none; height: 29px; padding-right: 8px; font: 10px/14px "Liberation Mono", "Noto Sans CJK SC", monospace; white-space: nowrap; }
.status .field { height: 22px; margin-left: 3px; padding: 0 3px; }
.status .locate { width: 244px; margin: 0 8px 0 0; padding: 0 8px; gap: 7px; }
.locate input::placeholder { color: #808080; opacity: 1; }
.note { flex: 1; }
.status .coord { width: 96px; }
.mouse { margin: 0 12px 0 6px; }
.status .scale { width: 82px; padding-right: 5px; }
.scale select { appearance: none; border-right: 1px solid #bbb; margin-right: 6px; }
.lock { margin: 0 7px 0 11px; }
.status .spin { width: 89px; padding-right: 0; }
.ud { display: flex; flex-direction: column; justify-content: center; align-items: center; gap: 5px; width: 13px; height: 100%; border-left: 1px solid #bbb; }
.rotl { margin-left: 9px; }
.rotl + .field { margin-left: 9px; }
.render { display: flex; align-items: center; gap: 5px; margin: 0 17px 0 6px; }
.epsg { gap: 3px; margin-right: 27px; }
.desk { flex: none; height: 4px; border-top: 1px solid #b9c2cf; background: linear-gradient(90deg, #dfeaf5, #d3defa 45%, #dfeaf8); }

.popup { position: absolute; left: 155px; top: 150px; width: 245px; border: 1px solid #9a9a9a; background: #fff; box-shadow: 3px 3px 3px rgba(0, 0, 0, .45); }
.popup button { width: 100%; height: 25px; padding-right: 2px; }
.popup .hot { background: #0078d7; color: #fff; box-shadow: inset 0 1px #4ea3e6, inset 0 -1px #4ea3e6; }
.popup hr { height: 1px; margin: 0 4px 1px; border: 0; background: #c0c0c0; }
.slot { width: 27px; padding-left: 6px; }
.popup .arrow { width: 9px; margin-left: auto; }

.netspeed { position: absolute; left: 1348px; top: 67px; width: 84px; height: 42px; padding: 1px 6px; border: 1px solid #333; border-radius: 3px; background: rgba(50, 50, 50, .92); color: #f59a23; line-height: 19px; white-space: nowrap; }
.netspeed span { display: block; }
.netspeed span + span { color: #7be02c; }
.marks { position: absolute; inset: 0; pointer-events: none; }
</style>
